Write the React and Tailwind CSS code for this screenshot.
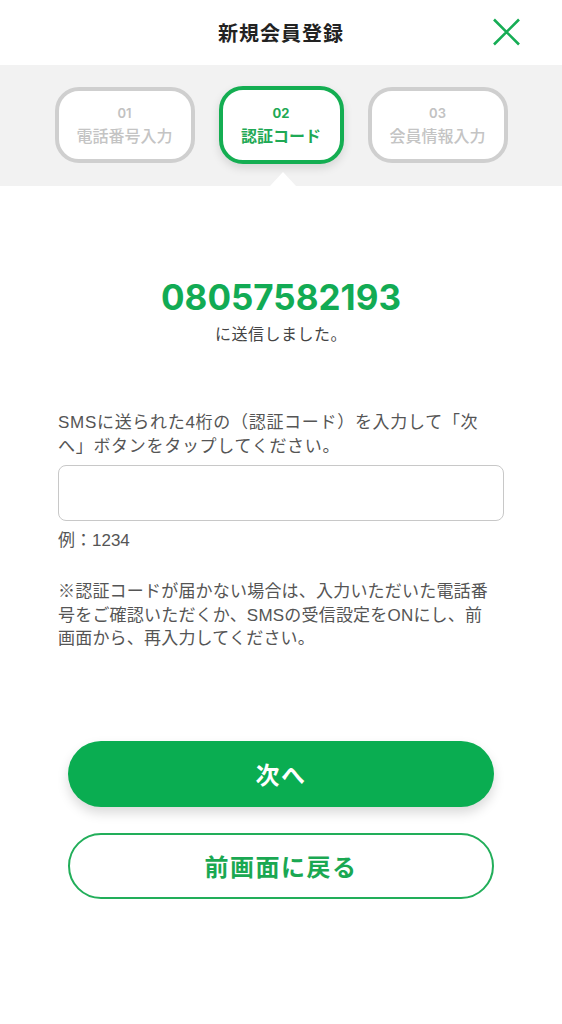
import React from "react";

const JP = { fontFamily: '"Noto Sans CJK JP", "Noto Sans", sans-serif' };
const MIX = { fontFamily: '"Liberation Sans", "Noto Sans CJK JP", sans-serif' };

function Step({ num, label, active }) {
  if (active) {
    return (
      <div className="flex h-[78px] w-[125px] flex-col items-center justify-center rounded-[24px] border-[4px] border-[#14ae52] bg-white shadow-[0_4px_10px_rgba(0,0,0,0.12)]">
        <div className="text-[13px] font-bold leading-[16px] text-[#1fa955]" style={{ fontFamily: 'Inter, sans-serif' }}>{num}</div>
        <div className="mt-[4px] text-[16px] font-bold leading-[20px] text-[#1fa955]">{label}</div>
      </div>
    );
  }
  return (
    <div className="flex h-[76px] w-[140px] flex-col items-center justify-center rounded-[24px] border-[4px] border-[#cfcfcf] bg-white">
      <div className="text-[13px] font-semibold leading-[16px] text-[#c2c2c2]" style={{ fontFamily: 'Inter, sans-serif' }}>{num}</div>
      <div className="mt-[4px] text-[16px] font-medium leading-[20px] text-[#c4c4c4]">{label}</div>
    </div>
  );
}

export default function App() {
  return (
    <div className="min-h-[1024px] w-[562px] bg-white" style={JP}>
      {/* header */}
      <div className="relative flex h-[65px] items-center justify-center">
        <div className="text-[20px] font-bold tracking-[1px] text-[#222]">新規会員登録</div>
        <svg className="absolute left-[492px] top-[18px]" width="29" height="28" viewBox="0 0 29 28">
          <path d="M2 1.5 L27 26.5 M27 1.5 L2 26.5" stroke="#16ad55" strokeWidth="2.6" strokeLinecap="butt" />
        </svg>
      </div>

      {/* steps band */}
      <div className="relative flex h-[121px] items-center justify-center gap-[24px] bg-[#f2f2f2] pb-[1px]">
        <Step num="01" label="電話番号入力" />
        <Step num="02" label="認証コード" active />
        <Step num="03" label="会員情報入力" />
        <div className="absolute bottom-0 left-[270px] h-0 w-0 border-x-[13px] border-b-[14px] border-x-transparent border-b-white" />
      </div>

      {/* phone */}
      <div className="mt-[90px] text-center text-[35px] font-bold leading-[42px] text-[#12ab54]" style={{ fontFamily: 'Inter, "Noto Sans", sans-serif' }}>
        08057582193
      </div>
      <div className="mt-[3px] text-center text-[16px] leading-[24px] tracking-[0.5px] text-[#444]">に送信しました。</div>

      <div className="px-[58px]" style={MIX}>
        <p className="mt-[66px] whitespace-nowrap text-[17px] leading-[24px] tracking-[0.7px] text-[#555]">
          SMSに送られた4桁の（認証コード）を入力して「次<br />へ」ボタンをタップしてください。
        </p>
        <input
          type="text"
          className="mt-[6px] block h-[56px] w-full rounded-[8px] border-[1.5px] border-[#c8c8c8] bg-white px-3 text-[17px] outline-none"
        />
        <div className="mt-[8px] text-[17px] leading-[24px] text-[#555]">例：1234</div>
        <p className="mt-[27px] whitespace-nowrap text-[17px] leading-[23.5px] tracking-[0.2px] text-[#555]">
          ※認証コードが届かない場合は、入力いただいた電話番<br />
          号をご確認いただくか、SMSの受信設定をONにし、前<br />
          画面から、再入力してください。
        </p>
      </div>

      <div className="mt-[90px] flex flex-col gap-[26px] px-[68px]">
        <button className="flex h-[66px] w-full items-center justify-center rounded-full bg-[#0aad51] text-[24px] font-bold tracking-[1.5px] text-white shadow-[0_6px_12px_rgba(0,0,0,0.15)]">
          次へ
        </button>
        <button className="flex h-[66px] w-full items-center justify-center rounded-full border-[2px] border-[#22ae5a] bg-white text-[24px] font-bold tracking-[1.5px] text-[#1aa852]">
          前画面に戻る
        </button>
      </div>
    </div>
  );
}
